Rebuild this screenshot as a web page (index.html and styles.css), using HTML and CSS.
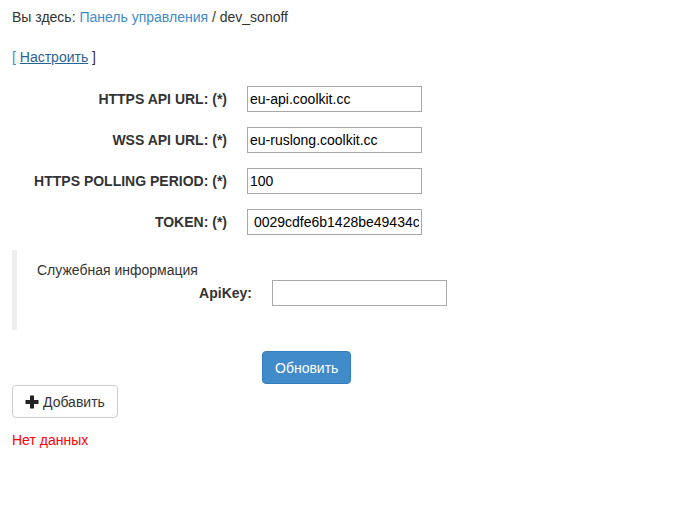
FILE: index.html
```html
<!DOCTYPE html>
<html lang="ru">
<head>
<meta charset="utf-8">
<link rel="stylesheet" href="styles.css">
</head>
<body>
<div class="page">
  <div class="breadcrumb">Вы здесь: <a href="#">Панель управления</a> / dev_sonoff</div>
  <div class="configure"><span class="br-open">[</span> <a href="#" class="ul">Настроить</a> <span class="br-close">]</span></div>
  <form class="form">
    <div class="row"><label class="lbl">HTTPS API URL: (*)</label><input class="inp" type="text" value="eu-api.coolkit.cc"></div>
    <div class="row"><label class="lbl">WSS API URL: (*)</label><input class="inp" type="text" value="eu-ruslong.coolkit.cc"></div>
    <div class="row"><label class="lbl">HTTPS POLLING PERIOD: (*)</label><input class="inp" type="text" value="100"></div>
    <div class="row"><label class="lbl">TOKEN: (*)</label><input class="inp" type="text" value=" 0029cdfe6b1428be49434c"></div>
    <div class="fieldset">
      <div class="legend">Служебная информация</div>
      <div class="row inner"><label class="lbl">ApiKey:</label><input class="inp" type="text" value=""></div>
    </div>
    <div class="submit-row"><button type="button" class="btn btn-primary">Обновить</button></div>
  </form>
  <button type="button" class="btn btn-default"><svg class="plus" width="14" height="14" viewBox="0 0 14 14"><rect x="5" y="0.5" width="4" height="13" fill="#222"/><rect x="0.5" y="5" width="13" height="4" fill="#222"/></svg> Добавить</button>
  <div class="nodata">Нет данных</div>
</div>
</body>
</html>
```

FILE: styles.css
```css
html, body {
  margin: 0;
  padding: 0;
  background: #fff;
}
.page {
  padding: 7px 12px 0 12px;
  font-family: "Liberation Sans", Arial, sans-serif;
  font-size: 14px;
  line-height: 20px;
  color: #333;
}
a {
  color: #428bca;
  text-decoration: none;
}
.breadcrumb {
  height: 20px;
}
.configure {
  margin-top: 20px;
  height: 20px;
}
.configure .br-open {
  color: #428bca;
}
.configure .br-close {
  color: #333;
}
.configure .ul {
  text-decoration: underline;
  color: #2a6496;
}
.form {
  margin-top: 19px;
  margin-bottom: 0;
  width: 589px;
}
.row {
  display: flex;
  align-items: center;
  height: 26px;
  margin-bottom: 15px;
}
.lbl {
  width: 215px;
  text-align: right;
  font-weight: bold;
  margin-right: 20px;
  flex: none;
}
.inp {
  box-sizing: border-box;
  width: 175px;
  height: 26px;
  border: 1px solid #a9a9a9;
  border-radius: 0;
  padding: 1px 2px;
  font-family: "Liberation Sans", Arial, sans-serif;
  font-size: 14px;
  color: #000;
  margin: 0;
  outline: none;
  white-space: pre;
}
.fieldset {
  border-left: 5px solid #eee;
  padding: 10px 0 10px 20px;
  margin-top: 0;
  height: 60px;
}
.legend {
  line-height: 20px;
  height: 20px;
}
.row.inner {
  margin-top: 0;
  margin-bottom: 0;
  height: 26px;
}
.submit-row {
  margin-top: 21px;
  padding-left: 250px;
  height: 34px;
}
.btn {
  box-sizing: border-box;
  display: inline-flex;
  align-items: center;
  height: 33px;
  padding: 6px 12px;
  font-family: "Liberation Sans", Arial, sans-serif;
  font-size: 14px;
  line-height: 20px;
  border: 1px solid transparent;
  border-radius: 4px;
  cursor: pointer;
}
.btn-primary {
  background: #428bca;
  border-color: #357ebd;
  color: #fff;
}
.btn-default {
  background: #fff;
  border-color: #ccc;
  color: #333;
}
.plus {
  margin-right: 4px;
}
.nodata {
  color: #ff0000;
  margin-top: 12px;
}
```
